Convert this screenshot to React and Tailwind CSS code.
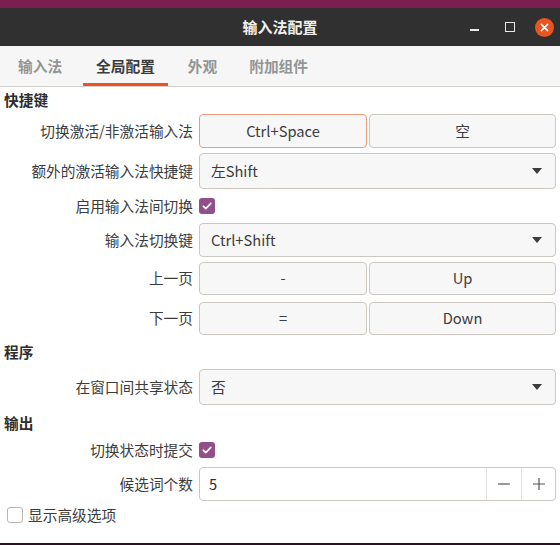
import React from "react";

const font = { fontFamily: '"Noto Sans CJK SC", "Noto Sans", sans-serif' };

const Check = ({ on }) =>
  on ? (
    <span className="flex h-[16px] w-[16px] items-center justify-center rounded-[3px] bg-[#924d8b]">
      <svg width="12" height="12" viewBox="0 0 12 12">
        <path d="M2.2 6.2 L4.8 8.6 L9.8 3.4" fill="none" stroke="#fff" strokeWidth="1.6" strokeLinecap="round" strokeLinejoin="round" />
      </svg>
    </span>
  ) : (
    <span className="block h-[16px] w-[16px] rounded-[3px] border border-[#b9b5b0] bg-white" />
  );

const Btn = ({ children, focus, first }) => (
  <div
    className={
      "flex items-center justify-center rounded-[4px] border bg-[#f7f7f7] text-[#3c3c3c] " +
      (first ? "w-[168px] " : "flex-1 ") +
      (focus ? "border-[#ee9a7c]" : "border-[#cdc7c2]")
    }
  >
    {children}
  </div>
);

const Drop = ({ value }) => (
  <div className="flex h-full flex-1 items-center justify-between rounded-[4px] border border-[#cdc7c2] bg-[#f7f7f7] pl-[11px] pr-[13px] text-[#3c3c3c]">
    <span>{value}</span>
    <svg width="10" height="6" viewBox="0 0 10 6">
      <path d="M0 0 H10 L5 6 Z" fill="#3c3c3c" />
    </svg>
  </div>
);

const Row = ({ label, h, mt, children }) => (
  <div className="flex" style={{ height: h, marginTop: mt }}>
    <div className="flex w-[189px] items-center justify-end text-[#3c3c3c]">{label}</div>
    <div className="ml-[6px] flex flex-1 gap-[2px]">{children}</div>
  </div>
);

const Section = ({ title, h, pt = 0 }) => (
  <div className="flex items-center font-bold text-[#2e2e2e]" style={{ height: h, paddingTop: pt }}>
    {title}
  </div>
);

export default function App() {
  return (
    <div className="flex h-[545px] w-[560px] flex-col overflow-hidden bg-[#7a1f50] text-[14.7px]" style={font}>
      <div className="h-[8px] shrink-0" />
      {/* title bar */}
      <div className="relative flex h-[38px] shrink-0 items-center justify-center bg-[#303030]">
        <span className="text-[15px] font-bold text-[#f0efec]">输入法配置</span>
        <div className="absolute right-[6px] top-0 flex h-full items-center">
          <span className="mr-[26px] mt-[5px] block h-[2px] w-[9px] bg-[#e8e8e8]" />
          <span className="mr-[20px] block h-[10px] w-[10px] border-[1.5px] border-[#e8e8e8]" />
          <span className="flex h-[19px] w-[19px] items-center justify-center rounded-full bg-[#e95420]">
            <svg width="9" height="9" viewBox="0 0 10 10">
              <path d="M1.5 1.5 L8.5 8.5 M8.5 1.5 L1.5 8.5" stroke="#fff" strokeWidth="1.7" strokeLinecap="round" />
            </svg>
          </span>
        </div>
      </div>
      {/* tabs */}
      <div className="flex h-[41px] shrink-0 items-stretch gap-[8px] border-b border-[#d3cfcb] bg-[#f6f6f6] pl-[5px] font-bold">
        <div className="flex items-center px-[13px] text-[#929595]">输入法</div>
        <div className="flex items-center border-b-[3px] border-[#e95420] px-[13px] pt-[3px] text-[#3c3c3c]">全局配置</div>
        <div className="flex items-center px-[12px] text-[#929595]">外观</div>
        <div className="flex items-center px-[12px] text-[#929595]">附加组件</div>
      </div>
      {/* content */}
      <div className="flex-1 bg-white px-[4px]">
        <Section title="快捷键" h={26} />
        <Row label="切换激活/非激活输入法" h={34} mt={1}>
          <Btn focus first>Ctrl+Space</Btn>
          <Btn>空</Btn>
        </Row>
        <Row label="额外的激活输入法快捷键" h={36} mt={5}>
          <Drop value="左Shift" />
        </Row>
        <Row label="启用输入法间切换" h={28} mt={3}>
          <div className="flex items-center">
            <Check on />
          </div>
        </Row>
        <Row label="输入法切换键" h={34} mt={3}>
          <Drop value="Ctrl+Shift" />
        </Row>
        <Row label="上一页" h={33} mt={5}>
          <Btn first>-</Btn>
          <Btn>Up</Btn>
        </Row>
        <Row label="下一页" h={33} mt={7}>
          <Btn first>=</Btn>
          <Btn>Down</Btn>
        </Row>
        <Section title="程序" h={34} />
        <Row label="在窗口间共享状态" h={36} mt={0}>
          <Drop value="否" />
        </Row>
        <Section title="输出" h={35} pt={2} />
        <Row label="切换状态时提交" h={20} mt={0}>
          <div className="flex items-center">
            <Check on />
          </div>
        </Row>
        <Row label="候选词个数" h={34} mt={7}>
          <div className="flex flex-1 rounded-[4px] border border-[#cdc7c2] bg-white text-[#2e2e2e]">
            <div className="flex flex-1 items-center pl-[9px]">5</div>
            <div className="flex w-[35px] items-center justify-center border-l border-[#e4e1de]">
              <svg width="14" height="14" viewBox="0 0 14 14">
                <path d="M1 7 H13" stroke="#555" strokeWidth="1.2" />
              </svg>
            </div>
            <div className="flex w-[34px] items-center justify-center border-l border-[#e4e1de]">
              <svg width="14" height="14" viewBox="0 0 14 14">
                <path d="M1 7 H13 M7 1 V13" stroke="#555" strokeWidth="1.2" />
              </svg>
            </div>
          </div>
        </Row>
        <div className="mt-[3px] flex h-[22px] items-center gap-[5px] pl-[3px] text-[#3c3c3c]">
          <Check />
          <span>显示高级选项</span>
        </div>
      </div>
      <div className="h-[2px] shrink-0 bg-[#2c1024]" />
    </div>
  );
}
